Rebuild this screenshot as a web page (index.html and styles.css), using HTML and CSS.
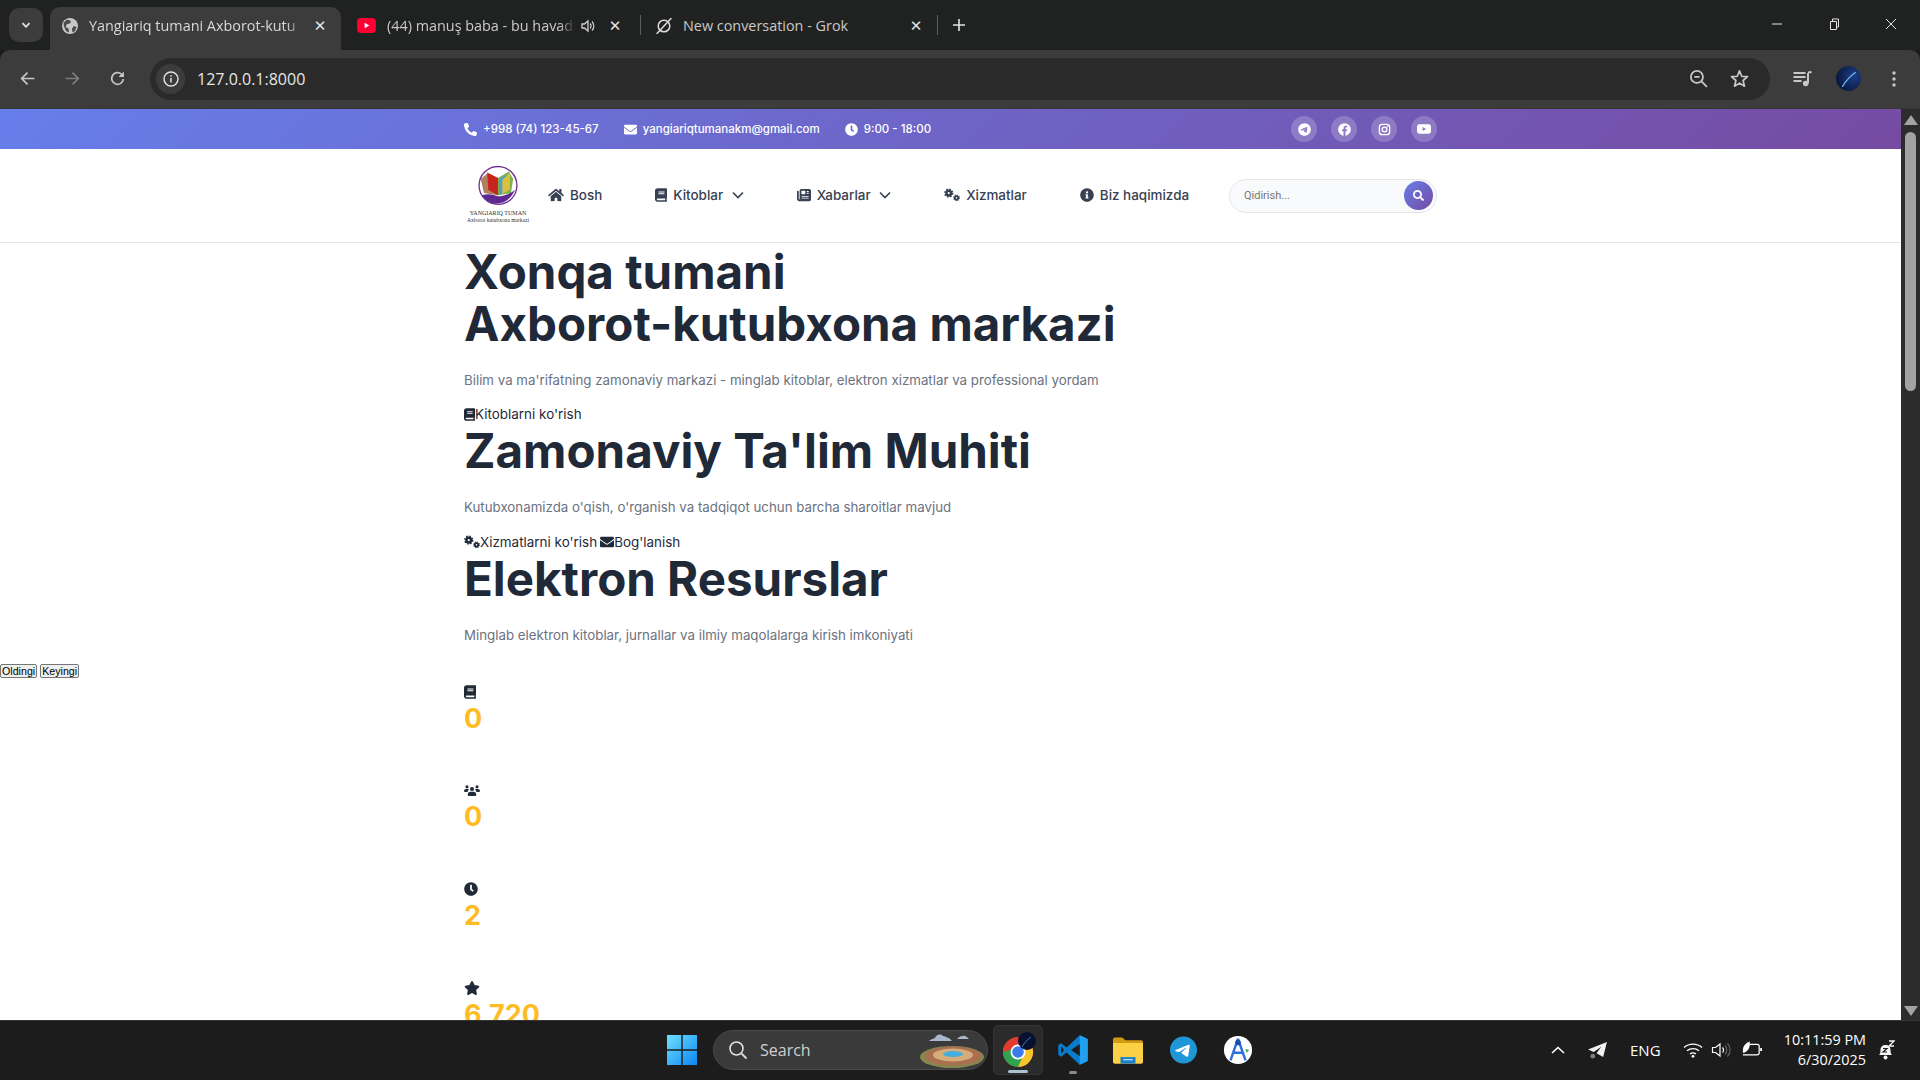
FILE: index.html
```html
<!DOCTYPE html>
<html lang="uz">
<head>
<meta charset="utf-8">
<title>Yangiariq tumani Axborot-kutubxona markazi</title>
<link rel="stylesheet" href="styles.css">
</head>
<body>
<svg class="defs" width="0" height="0" aria-hidden="true">
  <symbol id="i-phone" viewBox="0 0 512 512"><path d="M497.39 361.8l-112-48a24 24 0 0 0-28 6.9l-49.6 60.6A370.66 370.66 0 0 1 130.6 204.11l60.6-49.6a23.94 23.94 0 0 0 6.9-28l-48-112A24.16 24.16 0 0 0 122.6.61l-104 24A24 24 0 0 0 0 48c0 256.5 207.9 464 464 464a24 24 0 0 0 23.4-18.6l24-104a24.29 24.29 0 0 0-14.01-27.6z"/></symbol>
  <symbol id="i-env" viewBox="0 0 512 512"><path d="M502.3 190.8c3.9-3.1 9.7-.2 9.7 4.7V400c0 26.5-21.5 48-48 48H48c-26.5 0-48-21.5-48-48V195.6c0-5 5.7-7.8 9.7-4.7 22.4 17.4 52.1 39.5 154.1 113.6 21.1 15.4 56.7 47.8 92.2 47.6 35.7.3 72-32.8 92.3-47.6 102-74.1 131.6-96.3 154-113.7zM256 320c23.2.4 56.6-29.2 73.4-41.4 132.7-96.3 142.8-104.7 173.4-128.7 5.8-4.5 9.2-11.5 9.2-18.9v-19c0-26.5-21.5-48-48-48H48C21.5 64 0 85.5 0 112v19c0 7.4 3.4 14.3 9.2 18.9 30.6 23.9 40.7 32.4 173.4 128.7 16.8 12.2 50.2 41.8 73.4 41.4z"/></symbol>
  <symbol id="i-clock" viewBox="0 0 512 512"><path d="M256,8C119,8,8,119,8,256S119,504,256,504,504,393,504,256,393,8,256,8Zm92.49,313h0l-20,25a16,16,0,0,1-22.49,2.5h0l-67-49.72a40,40,0,0,1-15-31.23V112a16,16,0,0,1,16-16h32a16,16,0,0,1,16,16V256l58,42.5A16,16,0,0,1,348.49,321Z"/></symbol>
  <symbol id="i-home" viewBox="0 0 576 512"><path d="M280.37 148.26L96 300.11V464a16 16 0 0 0 16 16l112.06-.29a16 16 0 0 0 15.92-16V368a16 16 0 0 1 16-16h64a16 16 0 0 1 16 16v95.64a16 16 0 0 0 16 16.05L464 480a16 16 0 0 0 16-16V300L295.67 148.26a12.19 12.19 0 0 0-15.3 0zM571.6 251.47L488 182.56V44.05a12 12 0 0 0-12-12h-56a12 12 0 0 0-12 12v72.61L318.47 43a48 48 0 0 0-61 0L4.34 251.47a12 12 0 0 0-1.6 16.9l25.5 31A12 12 0 0 0 45.15 301l235.22-193.74a12.19 12.19 0 0 1 15.3 0L530.9 301a12 12 0 0 0 16.9-1.6l25.5-31a12 12 0 0 0-1.7-16.93z"/></symbol>
  <symbol id="i-book" viewBox="0 0 448 512"><path d="M448 360V24c0-13.3-10.7-24-24-24H96C43 0 0 43 0 96v320c0 53 43 96 96 96h328c13.3 0 24-10.7 24-24v-16c0-7.5-3.5-14.3-8.9-18.7-4.2-15.4-4.2-59.3 0-74.7 5.4-4.3 8.9-11.1 8.9-18.6zM128 134c0-3.3 2.7-6 6-6h212c3.3 0 6 2.7 6 6v20c0 3.3-2.7 6-6 6H134c-3.3 0-6-2.7-6-6v-20zm0 64c0-3.3 2.7-6 6-6h212c3.3 0 6 2.7 6 6v20c0 3.3-2.7 6-6 6H134c-3.3 0-6-2.7-6-6v-20zm253.4 250H96c-17.7 0-32-14.3-32-32 0-17.6 14.4-32 32-32h285.4c-1.9 17.1-1.9 46.9 0 64z"/></symbol>
  <symbol id="i-news" viewBox="0 0 512 512"><path fill-rule="evenodd" d="M96 96c0-35 29-64 64-64h288c35 0 64 29 64 64v320c0 35-29 64-64 64H80c-44 0-80-36-80-80V128c0-18 14-32 32-32s32 14 32 32v272c0 9 7 16 16 16s16-7 16-16V96zm64 24v80c0 13 11 24 24 24h96c13 0 24-11 24-24v-80c0-13-11-24-24-24h-96c-13 0-24 11-24 24zm208-8c-9 0-16 7-16 16s7 16 16 16h48c9 0 16-7 16-16s-7-16-16-16h-48zm0 64c-9 0-16 7-16 16s7 16 16 16h48c9 0 16-7 16-16s-7-16-16-16h-48zM176 288c-9 0-16 7-16 16s7 16 16 16h240c9 0 16-7 16-16s-7-16-16-16H176zm0 64c-9 0-16 7-16 16s7 16 16 16h240c9 0 16-7 16-16s-7-16-16-16H176z"/></symbol>
  <symbol id="i-cogs" viewBox="0 0 640 512">
    <circle cx="190" cy="180" r="95" fill="none" stroke="currentColor" stroke-width="100"/>
    <circle cx="190" cy="180" r="155" fill="none" stroke="currentColor" stroke-width="60" stroke-dasharray="62 60"/>
    <circle cx="500" cy="370" r="68" fill="none" stroke="currentColor" stroke-width="72"/>
    <circle cx="500" cy="370" r="112" fill="none" stroke="currentColor" stroke-width="44" stroke-dasharray="46 42"/>
  </symbol>
  <symbol id="i-info" viewBox="0 0 512 512"><path d="M256 8C119.043 8 8 119.083 8 256c0 136.997 111.043 248 248 248s248-111.003 248-248C504 119.083 392.957 8 256 8zm0 110c23.196 0 42 18.804 42 42s-18.804 42-42 42-42-18.804-42-42 18.804-42 42-42zm56 254c0 6.627-5.373 12-12 12h-88c-6.627 0-12-5.373-12-12v-24c0-6.627 5.373-12 12-12h12v-64h-12c-6.627 0-12-5.373-12-12v-24c0-6.627 5.373-12 12-12h64c6.627 0 12 5.373 12 12v100h12c6.627 0 12 5.373 12 12v24z"/></symbol>
  <symbol id="i-search" viewBox="0 0 512 512"><path d="M505 442.7L405.3 343c-4.5-4.5-10.6-7-17-7H372c27.6-35.3 44-79.7 44-128C416 93.1 322.9 0 208 0S0 93.1 0 208s93.1 208 208 208c48.3 0 92.7-16.4 128-44v16.3c0 6.4 2.5 12.5 7 17l99.7 99.7c9.4 9.4 24.6 9.4 33.9 0l28.3-28.3c9.4-9.4 9.4-24.6.1-34zM208 336c-70.7 0-128-57.2-128-128 0-70.7 57.2-128 128-128 70.7 0 128 57.2 128 128 0 70.7-57.2 128-128 128z"/></symbol>
  <symbol id="i-star" viewBox="0 0 576 512"><path d="M259.3 17.8L194 150.2 47.9 171.5c-26.2 3.8-36.7 36.1-17.7 54.6l105.7 103-25 145.5c-4.5 26.3 23.2 46 46.4 33.7L288 439.6l130.7 68.7c23.2 12.2 50.9-7.4 46.4-33.7l-25-145.5 105.7-103c19-18.5 8.5-50.8-17.7-54.6L382 150.2 316.7 17.8c-11.7-23.6-45.6-24-57.4 0z"/></symbol>
  <symbol id="i-users" viewBox="0 0 640 512">
    <circle cx="120" cy="130" r="62"/><circle cx="520" cy="130" r="62"/><circle cx="320" cy="215" r="82"/>
    <path d="M0 300c0-50 40-80 85-80h70c15 0 30 4 42 12-30 22-50 58-50 100H30c-17 0-30-14-30-32zM640 300c0-50-40-80-85-80h-70c-15 0-30 4-42 12 30 22 50 58 50 100h117c17 0 30-14 30-32zM150 430c0-60 48-105 105-105h130c57 0 105 45 105 105v30c0 18-14 32-32 32H182c-18 0-32-14-32-32z"/>
  </symbol>
  <symbol id="i-tg" viewBox="0 0 496 512"><path d="M248,8C111.033,8,0,119.033,0,256S111.033,504,248,504,496,392.967,496,256,384.967,8,248,8ZM362.952,176.66c-3.732,39.215-19.881,134.378-28.1,178.3-3.476,18.584-10.322,24.816-16.948,25.425-14.4,1.326-25.338-9.517-39.287-18.661-21.827-14.308-34.158-23.215-55.346-37.177-24.485-16.135-8.612-25,5.342-39.5,3.652-3.793,67.107-61.51,68.335-66.746.153-.655.3-3.1-1.154-4.384s-3.59-.849-5.135-.5q-3.283.746-104.608,69.142-14.845,10.194-26.894,9.934c-8.855-.191-25.888-5.006-38.551-9.123-15.531-5.048-27.875-7.717-26.8-16.291q.84-6.7,18.45-13.7,108.446-47.248,144.628-62.3c68.872-28.647,83.183-33.623,92.511-33.789,2.052-.034,6.639.474,9.61,2.885a10.452,10.452,0,0,1,3.53,6.716A43.765,43.765,0,0,1,362.952,176.66Z"/></symbol>
  <symbol id="i-fb" viewBox="0 0 512 512"><path d="M504 256C504 119 393 8 256 8S8 119 8 256c0 123.78 90.69 226.38 209.25 245V327.69h-63V256h63v-54.64c0-62.15 37-96.48 93.67-96.48 27.14 0 55.52 4.84 55.52 4.84v61h-31.28c-30.8 0-40.41 19.12-40.41 38.73V256h68.78l-11 71.69h-57.78V501C413.31 482.38 504 379.78 504 256z"/></symbol>
  <symbol id="i-ig" viewBox="0 0 24 24"><rect x="2.5" y="2.5" width="19" height="19" rx="5.5" fill="none" stroke="currentColor" stroke-width="2.4"/><circle cx="12" cy="12" r="4.4" fill="none" stroke="currentColor" stroke-width="2.4"/><circle cx="17.6" cy="6.4" r="1.4"/></symbol>
  <symbol id="i-yt" viewBox="0 0 24 24"><path fill-rule="evenodd" d="M4 4h16a4 4 0 0 1 4 4v8a4 4 0 0 1-4 4H4a4 4 0 0 1-4-4V8a4 4 0 0 1 4-4zM9.6 8.6v6.8l6-3.4z"/></symbol>
</svg>

<header class="tabstrip">
  <button class="tab-search" aria-label="Tabs"><svg class="ic12" viewBox="0 0 12 12"><path d="M2.5 4.2 6 7.8l3.5-3.6" fill="none" stroke="#e3e3e3" stroke-width="1.8"/></svg></button>
  <div class="tab tab-active">
    <svg class="fav" viewBox="0 0 16 16"><circle cx="8" cy="8" r="8" fill="#c7c7c7"/><path d="M5 1.5 9 3 8 5.500 5 6 3.500 9 6.500 10.500 7 14.500 4 13 2 8.500 1.500 5zM12 8l2.500 1-1.500 4-2.500 1.500-.5-4z" fill="#4a4a4a"/></svg>
    <span class="tab-title">Yangiariq tumani Axborot-kutu</span>
    <span class="tab-x">✕</span>
  </div>
  <div class="tab">
    <svg class="fav fav-yt" viewBox="0 0 20 16"><rect width="20" height="16" rx="4" fill="#ff0033"/><path d="M8 5v6l5-3z" fill="#fff"/></svg>
    <span class="tab-title">(44) manuş baba - bu havad</span>
    <svg class="tab-vol" viewBox="0 0 16 16"><path d="M2 6h2.500L8 3v10L4.500 10H2z" fill="none" stroke="#d0d0d0" stroke-width="1.300"/><path d="M10 5.500a3.500 3.500 0 0 1 0 5M12 3.500a6.500 6.500 0 0 1 0 9" fill="none" stroke="#d0d0d0" stroke-width="1.200"/></svg>
    <span class="tab-x">✕</span>
  </div>
  <i class="tab-sep"></i>
  <div class="tab tab-grok">
    <svg class="fav" viewBox="0 0 16 16"><circle cx="8" cy="8" r="5.800" fill="none" stroke="#dcdcdc" stroke-width="1.500"/><path d="M1 15.500 15 .5" stroke="#dcdcdc" stroke-width="1.500" stroke-linecap="round"/></svg>
    <span class="tab-title tab-title-full">New conversation - Grok</span>
    <span class="tab-x">✕</span>
  </div>
  <i class="tab-sep"></i>
  <svg class="tab-plus" viewBox="0 0 14 14"><path d="M7 1v12M1 7h12" stroke="#e3e3e3" stroke-width="1.600"/></svg>
  <div class="win-ctrls">
    <svg viewBox="0 0 12 12"><path d="M1 6h10" stroke="#e3e3e3" stroke-width="1"/></svg>
    <svg viewBox="0 0 12 12"><path d="M2.500 3.500h6v8h-6zM4.500 3.500v-2.500h6v8h-2" fill="none" stroke="#e3e3e3" stroke-width="1"/></svg>
    <svg viewBox="0 0 12 12"><path d="M1 1l10 10M11 1 1 11" stroke="#e3e3e3" stroke-width="1"/></svg>
  </div>
</header>

<nav class="toolbar">
  <svg class="tb-btn" viewBox="0 0 16 16"><path d="M14.500 8H2.500M8 2.500 2.500 8 8 13.500" fill="none" stroke="#c7c7c7" stroke-width="1.600"/></svg>
  <svg class="tb-btn" viewBox="0 0 16 16"><path d="M1.500 8h12M8 2.500 13.500 8 8 13.500" fill="none" stroke="#7d7d7d" stroke-width="1.600"/></svg>
  <svg class="tb-btn" viewBox="0 0 16 16"><path d="M13.500 8.500A5.500 5.500 0 1 1 11.800 4L13.500 5.700" fill="none" stroke="#c7c7c7" stroke-width="1.600"/><path d="M14 1.500v5h-5z" fill="#c7c7c7"/></svg>
  <div class="omnibox">
    <span class="chip"><svg viewBox="0 0 16 16"><circle cx="8" cy="8" r="7" fill="none" stroke="#e3e3e3" stroke-width="1.400"/><path d="M8 7v4.500M8 4.300v1.500" stroke="#e3e3e3" stroke-width="1.500"/></svg></span>
    <span class="url">127.0.0.1:8000</span>
    <svg class="omni-ic omni-zoom" viewBox="0 0 18 18"><circle cx="7.500" cy="7.500" r="5.700" fill="none" stroke="#c7c7c7" stroke-width="1.700"/><path d="M5 7.500h5M11.800 11.800 17 17" stroke="#c7c7c7" stroke-width="1.700"/></svg>
    <svg class="omni-ic" viewBox="0 0 18 18"><path d="M9 1.800 11.100 6.900 16.600 7.300 12.400 10.900 13.700 16.300 9 13.400 4.300 16.300 5.600 10.900 1.400 7.300 6.900 6.900z" fill="none" stroke="#c7c7c7" stroke-width="1.600" stroke-linejoin="round"/></svg>
  </div>
  <svg class="media" viewBox="0 0 20 18"><path d="M1 3h12M1 7h12M1 11h8" stroke="#c7c7c7" stroke-width="2"/><path d="M15.500 3v10" stroke="#c7c7c7" stroke-width="2"/><path d="M15.500 2.500 19 2" stroke="#c7c7c7" stroke-width="2"/><circle cx="13.200" cy="13.500" r="2.800" fill="#c7c7c7"/></svg>
  <svg class="avatar" viewBox="0 0 24 24"><defs><radialGradient id="ava" cx=".7" cy=".4" r=".8"><stop offset="0" stop-color="#1d3f86"/><stop offset="1" stop-color="#071233"/></radialGradient></defs><circle cx="12" cy="12" r="12" fill="url(#ava)"/><path d="M6 20C9 15 13 10 19 6" fill="none" stroke="#6fb7ff" stroke-width="1.200"/></svg>
  <svg class="dots" viewBox="0 0 4 18"><circle cx="2" cy="3" r="1.700" fill="#c7c7c7"/><circle cx="2" cy="9" r="1.700" fill="#c7c7c7"/><circle cx="2" cy="15" r="1.700" fill="#c7c7c7"/></svg>
</nav>

<div class="viewport">
  <main class="page">
    <div class="topbar">
      <div class="wrap topbar-in">
        <span class="tb-item"><svg class="ic ic13"><use href="#i-phone"/></svg>+998 (74) 123-45-67</span>
        <span class="tb-item"><svg class="ic ic13"><use href="#i-env"/></svg>yangiariqtumanakm@gmail.com</span>
        <span class="tb-item"><svg class="ic ic13"><use href="#i-clock"/></svg>9:00 - 18:00</span>
        <div class="socials">
          <a class="soc"><svg class="ic ic13"><use href="#i-tg"/></svg></a>
          <a class="soc"><svg class="ic ic13"><use href="#i-fb"/></svg></a>
          <a class="soc"><svg class="ic ic13"><use href="#i-ig"/></svg></a>
          <a class="soc"><svg class="ic ic14"><use href="#i-yt"/></svg></a>
        </div>
      </div>
    </div>

    <div class="navbar">
      <div class="wrap navbar-in">
        <a class="logo">
          <svg class="logo-art" viewBox="0 0 42 37">
            <circle cx="21" cy="18" r="17.500" fill="none" stroke="#6a2c91" stroke-width="1.200"/>
            <path d="M5 12 11 7 21 11V27L8 25z" fill="#b0805a"/>
            <path d="M11 6 21 11V27L12 22z" fill="#c8231f"/>
            <path d="M21 11 31 5 35 12 33 25 21 27z" fill="#7fb24a"/>
            <path d="M22 12 29 8 30 23 22 27z" fill="#4f9fc9"/>
            <path d="M25 13 32 6 32 22 25 26z" fill="#d9c03f"/>
            <path d="M6 27C13 25 18 27 21 28 26 28 32 26 37 22 33 30 27 35 19 35 13 35 9 31 6 27z" fill="#5f2a8f"/>
          </svg>
          <span class="logo-t1">YANGIARIQ TUMAN</span>
          <span class="logo-t2">Axborot kutubxona markazi</span>
        </a>
        <ul class="menu">
          <li class="menu-item"><svg class="ic ic16"><use href="#i-home"/></svg>Bosh</li>
          <li class="menu-item"><svg class="ic ic12w"><use href="#i-book"/></svg>Kitoblar<svg class="chev" viewBox="0 0 12 8"><path d="M1 1.500 6 6.500l5-5" fill="none" stroke="currentColor" stroke-width="1.600"/></svg></li>
          <li class="menu-item"><svg class="ic ic14"><use href="#i-news"/></svg>Xabarlar<svg class="chev" viewBox="0 0 12 8"><path d="M1 1.500 6 6.500l5-5" fill="none" stroke="currentColor" stroke-width="1.600"/></svg></li>
          <li class="menu-item"><svg class="ic ic16"><use href="#i-cogs"/></svg>Xizmatlar</li>
          <li class="menu-item"><svg class="ic ic14"><use href="#i-info"/></svg>Biz haqimizda</li>
        </ul>
        <div class="search">
          <span class="search-ph">Qidirish...</span>
          <button class="search-btn" aria-label="Qidirish"><svg class="ic ic11"><use href="#i-search"/></svg></button>
        </div>
      </div>
    </div>

    <section class="wrap slides">
      <div class="slide">
        <h1>Xonqa tumani<br>Axborot-kutubxona markazi</h1>
        <p>Bilim va ma'rifatning zamonaviy markazi - minglab kitoblar, elektron xizmatlar va professional yordam</p>
        <div class="links"><a class="lnk"><svg class="ic ic11w"><use href="#i-book"/></svg>Kitoblarni ko'rish</a></div>
      </div>
      <div class="slide">
        <h1>Zamonaviy Ta'lim Muhiti</h1>
        <p>Kutubxonamizda o'qish, o'rganish va tadqiqot uchun barcha sharoitlar mavjud</p>
        <div class="links"><a class="lnk"><svg class="ic ic16"><use href="#i-cogs"/></svg>Xizmatlarni ko'rish</a><a class="lnk"><svg class="ic ic14"><use href="#i-env"/></svg>Bog'lanish</a></div>
      </div>
      <div class="slide">
        <h1>Elektron Resurslar</h1>
        <p>Minglab elektron kitoblar, jurnallar va ilmiy maqolalarga kirish imkoniyati</p>
      </div>
    </section>

    <div class="slider-btns"><button class="plain-btn">Oldingi</button> <button class="plain-btn">Keyingi</button></div>

    <section class="wrap stats">
      <div class="stat"><svg class="ic ic12w"><use href="#i-book"/></svg><div class="num">0</div></div>
      <div class="stat"><svg class="ic ic16"><use href="#i-users"/></svg><div class="num">0</div></div>
      <div class="stat"><svg class="ic ic14"><use href="#i-clock"/></svg><div class="num">2</div></div>
      <div class="stat"><svg class="ic ic16"><use href="#i-star"/></svg><div class="num">6,720</div></div>
    </section>
  </main>
  <aside class="scrollbar">
    <i class="arrow-up"></i>
    <i class="thumb"></i>
    <i class="arrow-down"></i>
  </aside>
</div>

<footer class="taskbar">
  <div class="task-center">
    <svg class="win-logo" viewBox="0 0 30 30"><defs><linearGradient id="w" x1="0" y1="0" x2="1" y2="1"><stop offset="0" stop-color="#6fe0ff"/><stop offset="1" stop-color="#0a86f0"/></linearGradient></defs><path d="M0 0h14.300v14.300H0zM15.700 0H30v14.300H15.700zM0 15.700h14.300V30H0zM15.700 15.700H30V30H15.700z" fill="url(#w)"/></svg>
    <div class="task-search">
      <svg class="ts-ic" viewBox="0 0 20 20"><circle cx="8.500" cy="8.500" r="6.500" fill="none" stroke="#e0e0e0" stroke-width="1.600"/><path d="M13.300 13.300 18.500 18.500" stroke="#e0e0e0" stroke-width="1.800"/></svg>
      <span class="ts-txt">Search</span>
      <svg class="ts-art" viewBox="0 0 66 36"><ellipse cx="33" cy="25" rx="32" ry="11" fill="#85874d"/><ellipse cx="34" cy="24" rx="28" ry="9.500" fill="#a96f50"/><ellipse cx="34" cy="23" rx="20" ry="6.500" fill="#d6ad7a"/><ellipse cx="34" cy="22" rx="10" ry="3" fill="#45aedd"/><path d="M10 9c2-2 4-2 6-3 1-3 5-5 8-2 2 0 4 2 6 2l3 3zM38 7c2-2 3-3 6-3 2-1 4 1 6 3z" fill="#aab6cc"/></svg>
    </div>
    <div class="task-app task-app-on">
      <svg class="app-ic" viewBox="0 0 36 36"><circle cx="18" cy="20" r="15" fill="#e33b2e"/><path d="M18 20 31 12.500A15 15 0 0 1 18 35z" fill="#f8c62c"/><path d="M18 35A15 15 0 0 1 3 20a15 15 0 0 1 2-7.500L18 20l6 2z" fill="#2fa44f"/><path d="M3 20A15 15 0 0 1 8 9L13 17z" fill="#e33b2e"/><circle cx="18" cy="20" r="7.500" fill="#fff"/><circle cx="18" cy="20" r="5.800" fill="#3b7bea"/><circle cx="27" cy="9" r="9" fill="#07112e"/><path d="M22 15C24 11 27 8 31 5" fill="none" stroke="#3d79c9" stroke-width="1"/></svg>
      <i class="app-bar app-bar-wide"></i>
    </div>
    <div class="task-app">
      <svg class="app-ic app-vs" viewBox="0 0 100 100"><path d="M71 4 96 16V84L71 96 30 58 13 71 4 66V34L13 29 30 42z" fill="#0a7ccc"/><path d="M71 4 96 16V84L71 96z" fill="#21a0f0"/><path d="M71 31 44 50 71 69z" fill="#1c1c1c"/><path d="M13 38 22 50 13 62z" fill="#1c1c1c"/></svg>
      <i class="app-bar"></i>
    </div>
    <div class="task-app">
      <svg class="app-ic app-fold" viewBox="0 0 32 28"><path d="M0 2a2 2 0 0 1 2-2h8l3 3h17a2 2 0 0 1 2 2v3H0z" fill="#d29a12"/><path d="M0 6h32v20a2 2 0 0 1-2 2H2a2 2 0 0 1-2-2z" fill="#fbd045"/><path d="M8 21h16v7H8z" fill="#1b80c8"/><path d="M11 23h10v1.500H11z" fill="#a8dbf7"/></svg>
    </div>
    <div class="task-app">
      <svg class="app-ic app-tg" viewBox="0 0 496 512"><circle cx="248" cy="256" r="200" fill="#fff"/><use href="#i-tg" fill="#1f96d6" width="496" height="512"/></svg>
    </div>
    <div class="task-app">
      <svg class="app-ic app-as" viewBox="0 0 32 32"><circle cx="16" cy="16" r="15" fill="#fff"/><path d="M16 4 8 27M16 4l8 23M10.500 19h11" fill="none" stroke="#2f6fe0" stroke-width="2.600"/><circle cx="16" cy="8" r="3" fill="#1c4fa8"/><path d="M24 15l4 1-3 3z" fill="#3ea04a"/></svg>
    </div>
  </div>
  <div class="tray">
    <svg class="tray-chev" viewBox="0 0 14 8"><path d="M1 7 7 1.500 13 7" fill="none" stroke="#fff" stroke-width="1.600"/></svg>
    <svg class="tray-plane" viewBox="0 0 20 18"><path d="M0 8 20 0 16 16 9 12 14 5 6 10.500z" fill="#f2f2f2"/><circle cx="5" cy="15" r="2.500" fill="#808080"/></svg>
    <span class="tray-eng">ENG</span>
    <svg class="tray-wifi" viewBox="0 0 20 16"><path d="M1 5.500C6 1 14 1 19 5.500M4 8.800C7.500 5.800 12.500 5.800 16 8.800M7 12c2-1.500 4-1.500 6 0" fill="none" stroke="#fff" stroke-width="1.300"/><circle cx="10" cy="14.300" r="1.400" fill="#fff"/></svg>
    <svg class="tray-vol" viewBox="0 0 20 16"><path d="M1.500 5.500h3L9 2v12L4.500 10.500h-3z" fill="none" stroke="#fff" stroke-width="1.200"/><path d="M11.500 5.500a3.500 3.500 0 0 1 0 5" fill="none" stroke="#fff" stroke-width="1.200"/><path d="M14 3.500a6.500 6.500 0 0 1 0 9M16.500 1.500a9.500 9.500 0 0 1 0 13" fill="none" stroke="#666" stroke-width="1.100"/></svg>
    <svg class="tray-bat" viewBox="0 0 22 18"><path d="M8 3h8a2 2 0 0 1 2 2v7a2 2 0 0 1-2 2H1" fill="none" stroke="#fff" stroke-width="1.300"/><path d="M19 7h2v3h-2z" fill="#fff"/><path d="M1 12C0 6 3 2 8 0c1 5-1 10-6 12z" fill="#fff"/></svg>
    <div class="tray-clock"><span>10:11:59 PM</span><span>6/30/2025</span></div>
    <svg class="tray-bell" viewBox="0 0 18 20"><path d="M2 15c1-1 1.500-2 1.500-5 0-3 2-5 5-5s5 2 5 5c0 3 .5 4 1.500 5z" fill="#f4f4f4"/><circle cx="8.500" cy="17.500" r="2" fill="#f4f4f4"/><path d="M6 8.500h4L6 12h4" fill="none" stroke="#1c1c1c" stroke-width="1.200"/><path d="M12 1h5l-5 5h5" fill="none" stroke="#f4f4f4" stroke-width="1.300"/></svg>
  </div>
</footer>
</body>
</html>
```
FILE: styles.css
```css
* { box-sizing: border-box; }
html, body { margin: 0; height: 100%; }
body {
  display: flex;
  flex-direction: column;
  height: 100vh;
  overflow: hidden;
  background: #1c1c1c;
  font-family: Inter, "Liberation Sans", sans-serif;
}
.defs { display: block; height: 0; flex: none; }
a { color: inherit; text-decoration: none; }
ul { list-style: none; margin: 0; padding: 0; }

/* browser chrome */
.tabstrip {
  flex: none;
  height: 50px;
  background: #202221;
  display: flex;
  align-items: flex-end;
  font-family: "Open Sans", "Noto Sans", sans-serif;
  font-size: 14.4px;
  color: #e3e3e3;
}
.tab-search {
  width: 34px; height: 34px;
  margin: 0 7px 8px 9px;
  border: 0; padding: 0;
  border-radius: 10px;
  background: #3c3c3c;
  display: flex; align-items: center; justify-content: center;
}
.ic12 { width: 12px; height: 12px; }
.tab {
  width: 291px;
  height: 43px;
  padding: 0 13px 6px 12px;
  display: flex;
  align-items: center;
  border-radius: 10px 10px 0 0;
  margin-right: 4px;
  color: #c9c9c9;
}
.tab-active { background: #3c3c3c; color: #d8d8d8; }
.tab-grok { width: 296px; margin: 0; padding-left: 15px; }
.fav { width: 16px; height: 16px; flex: none; margin-right: 11px; }
.fav-yt { width: 19px; height: 15px; }
.tab-title {
  flex: 1;
  overflow: hidden;
  white-space: nowrap;
  min-width: 0;
  -webkit-mask-image: linear-gradient(to right, #000 92%, transparent);
  mask-image: linear-gradient(to right, #000 92%, transparent);
}
.tab-title-full { -webkit-mask-image: none; mask-image: none; }
.tab-active .tab-title { margin-right: 8px; }
.tab-vol { width: 16px; height: 16px; flex: none; margin: 0 11px 0 5px; }
.tab-x { font-size: 15px; width: 16px; text-align: center; flex: none; color: #e3e3e3; font-family: "DejaVu Sans", sans-serif; }
.tab-sep { width: 1px; height: 20px; background: #5c5c5c; margin: 0 0 15px; flex: none; }
.tab-plus { width: 14px; height: 14px; margin: 0 0 18px 14px; flex: none; }
.win-ctrls { margin-left: auto; display: flex; gap: 45px; padding: 0 23px 20px 0; }
.win-ctrls svg { width: 12px; height: 12px; }

.toolbar {
  flex: none;
  height: 59px;
  background: #3c3c3c;
  border-radius: 10px 10px 0 0;
  border-bottom: 1px solid #353535;
  display: flex;
  align-items: center;
  padding: 0 0 1px 19px;
  color: #e3e3e3;
}
.tb-btn { width: 17px; height: 17px; margin-right: 28px; flex: none; }
.tb-btn:nth-of-type(3) { margin-right: 27px; }
.omnibox {
  width: 1620px;
  height: 42px;
  margin-left: -3px;
  border-radius: 21px;
  background: #2a2a2a;
  display: flex;
  align-items: center;
  padding: 0 0 0 6px;
}
.chip { width: 29px; height: 30px; border-radius: 15px; background: #3c3c3c; display: flex; align-items: center; justify-content: center; flex: none; }
.chip svg { width: 16px; height: 16px; }
.url { margin-left: 12px; font-family: "Open Sans", "Noto Sans", sans-serif; font-size: 16px; color: #e6e6e6; }
.omni-ic { width: 19px; height: 19px; margin-right: 21px; flex: none; }
.omni-zoom { margin-left: auto; margin-right: 22px; }
.media { width: 21px; height: 18px; margin-left: 22px; flex: none; }
.avatar { width: 25px; height: 25px; margin-left: 23px; flex: none; }
.dots { width: 4px; height: 18px; margin-left: 31px; flex: none; }

/* page */
.viewport { flex: 1; min-height: 0; display: flex; }
.page { flex: 1; min-width: 0; background: #fff; overflow: hidden; }
.wrap { width: 973px; margin: 0 auto; }
.scrollbar {
  width: 19px; flex: none;
  background: #2c2c2c;
  display: flex; flex-direction: column; align-items: center;
  padding: 6px 0 4px;
}
.arrow-up { border: 7px solid transparent; border-top: 0; border-bottom: 10px solid #a3a3a3; }
.thumb { width: 11px; height: 259px; margin-top: 7px; border-radius: 6px; background: #a3a3a3; }
.arrow-down { margin-top: auto; border: 7px solid transparent; border-bottom: 0; border-top: 10px solid #a3a3a3; }

.ic { fill: currentColor; flex: none; display: inline-block; vertical-align: -2px; }
.ic11 { width: 11px; height: 11px; }
.ic11w { width: 11px; height: 13px; }
.ic12w { width: 12px; height: 14px; }
.ic13 { width: 13px; height: 13px; }
.ic14 { width: 14px; height: 14px; }
.ic16 { width: 16px; height: 14px; }

.topbar {
  height: 40px;
  background: linear-gradient(135deg, #667eea, #764ba2);
  color: #fff;
  font-size: 11.5px;
  font-weight: 500;
}
.topbar-in { height: 100%; display: flex; align-items: center; gap: 25px; }
.tb-item { display: flex; align-items: center; gap: 6px; }
.socials { margin-left: auto; display: flex; gap: 14px; }
.soc { width: 26px; height: 26px; border-radius: 50%; background: rgba(255,255,255,.2); display: flex; align-items: center; justify-content: center; }

.navbar { height: 94px; border-bottom: 1px solid #e5e7eb; background: #fff; }
.navbar-in { height: 100%; display: flex; align-items: center; }
.logo { width: 68px; margin: -2px 0 0; display: flex; flex-direction: column; align-items: center; font-family: "Liberation Serif", serif; color: #333; flex: none; }
.logo-art { width: 46px; height: 40px; margin-bottom: 3px; }
.logo-t1 { font-size: 6px; line-height: 8px; white-space: nowrap; }
.logo-t2 { font-size: 5.5px; line-height: 7px; white-space: nowrap; }
.menu { display: flex; gap: 53px; margin: -2px 0 0 16px; }
.menu-item { display: flex; align-items: center; gap: 6px; font-size: 13.44px; font-weight: 500; color: #374151; white-space: nowrap; }
.chev { width: 12px; height: 8px; margin-left: 2.5px; }
.search {
  margin-left: auto;
  width: 208px; height: 34px;
  border: 1px solid #e5e7eb;
  border-radius: 17px;
  background: #f9fafb;
  display: flex; align-items: center;
  padding: 0 3px 0 14px;
}
.search-ph { font-size: 11px; color: #757575; font-family: Roboto, Inter, sans-serif; }
.search-btn { margin-left: auto; width: 29px; height: 29px; border: 0; padding: 0; border-radius: 50%; background: linear-gradient(135deg, #667eea, #764ba2); color: #fff; display: flex; align-items: center; justify-content: center; }

.slides { padding-top: 3px; }
.slide h1 { margin: 0 0 20.5px; font-size: 47.5px; line-height: 51.5px; font-weight: 700; color: #1f2937; }
.slide p { margin: 0 0 13.5px; font-size: 13.3px; line-height: 21px; color: #6b7280; }
.links { display: flex; gap: 3px; height: 21px; font-size: 13.44px; line-height: 21px; color: #1f2937; }
.lnk { display: flex; align-items: center; }
.slider-btns { margin-top: 18px; height: 15px; font-size: 0; display: flex; gap: 3px; }
.plain-btn {
  font-family: "Liberation Sans", Arial, sans-serif;
  font-size: 10.67px;
  height: 14px;
  line-height: 12px;
  padding: 0 1px;
  border: 1px solid #767676;
  border-radius: 2px;
  background: #efefef;
  color: #000;
}
.stats { padding-top: 6px; display: flex; flex-direction: column; }
.stat { height: 98.8px; color: #1f2937; }
.stat .ic { display: block; }
.num { font-size: 27px; line-height: 36px; font-weight: 700; color: #fdbc24; margin-top: 2px; }

/* taskbar */
.taskbar {
  flex: none;
  height: 60px;
  padding-bottom: 1px;
  background: #1c1c1c;
  border-top: 1px solid #333;
  display: flex;
  align-items: center;
  position: relative;
  color: #fff;
  font-family: "Open Sans", "Noto Sans", sans-serif;
}
.task-center { margin-left: 667px; display: flex; align-items: center; }
.win-logo { width: 30px; height: 30px; flex: none; margin-right: 16px; }
.task-search {
  width: 275px; height: 40px;
  border-radius: 20px;
  background: #3a3a3a;
  border: 1px solid #4a4a4a;
  display: flex; align-items: center;
  padding-left: 14px;
  margin-right: 5px;
  overflow: hidden;
}
.ts-ic { width: 20px; height: 20px; flex: none; }
.ts-txt { margin-left: 12px; font-size: 16px; color: #d0d0d0; }
.ts-art { width: 66px; height: 36px; margin-left: auto; margin-right: 2px; flex: none; }
.task-app { width: 50px; height: 50px; margin-right: 5px; display: flex; align-items: center; justify-content: center; position: relative; border-radius: 5px; flex: none; }
.task-app-on { background: #2b2b2b; border: 1px solid #343434; }
.app-ic { width: 36px; height: 36px; }
.app-vs { width: 32px; height: 32px; }
.app-fold { width: 30px; height: 27px; }
.app-tg { width: 27px; height: 28px; }
.app-as { width: 30px; height: 30px; }
.app-bar { position: absolute; bottom: 1px; left: 50%; width: 8px; height: 3px; margin-left: -4px; border-radius: 2px; background: #8a8a8a; }
.app-bar-wide { width: 20px; margin-left: -10px; background: #a9c4d0; }
.tray { position: absolute; top: 0; bottom: 1px; right: 0; width: 380px; display: flex; align-items: center; }
.tray svg { flex: none; }
.tray-chev { width: 14px; height: 8px; margin-left: 11px; }
.tray-plane { width: 19px; height: 17px; margin-left: 23px; }
.tray-eng { font-size: 15px; margin-left: 23px; width: 33px; }
.tray-wifi { width: 20px; height: 16px; margin-left: 20px; }
.tray-vol { width: 20px; height: 16px; margin-left: 8px; }
.tray-bat { width: 21px; height: 18px; margin-left: 11px; }
.tray-clock { width: 82px; margin-left: 21px; display: flex; flex-direction: column; align-items: flex-end; font-size: 14.4px; line-height: 20px; white-space: nowrap; }
.tray-bell { width: 18px; height: 20px; margin-left: 11px; }
```
